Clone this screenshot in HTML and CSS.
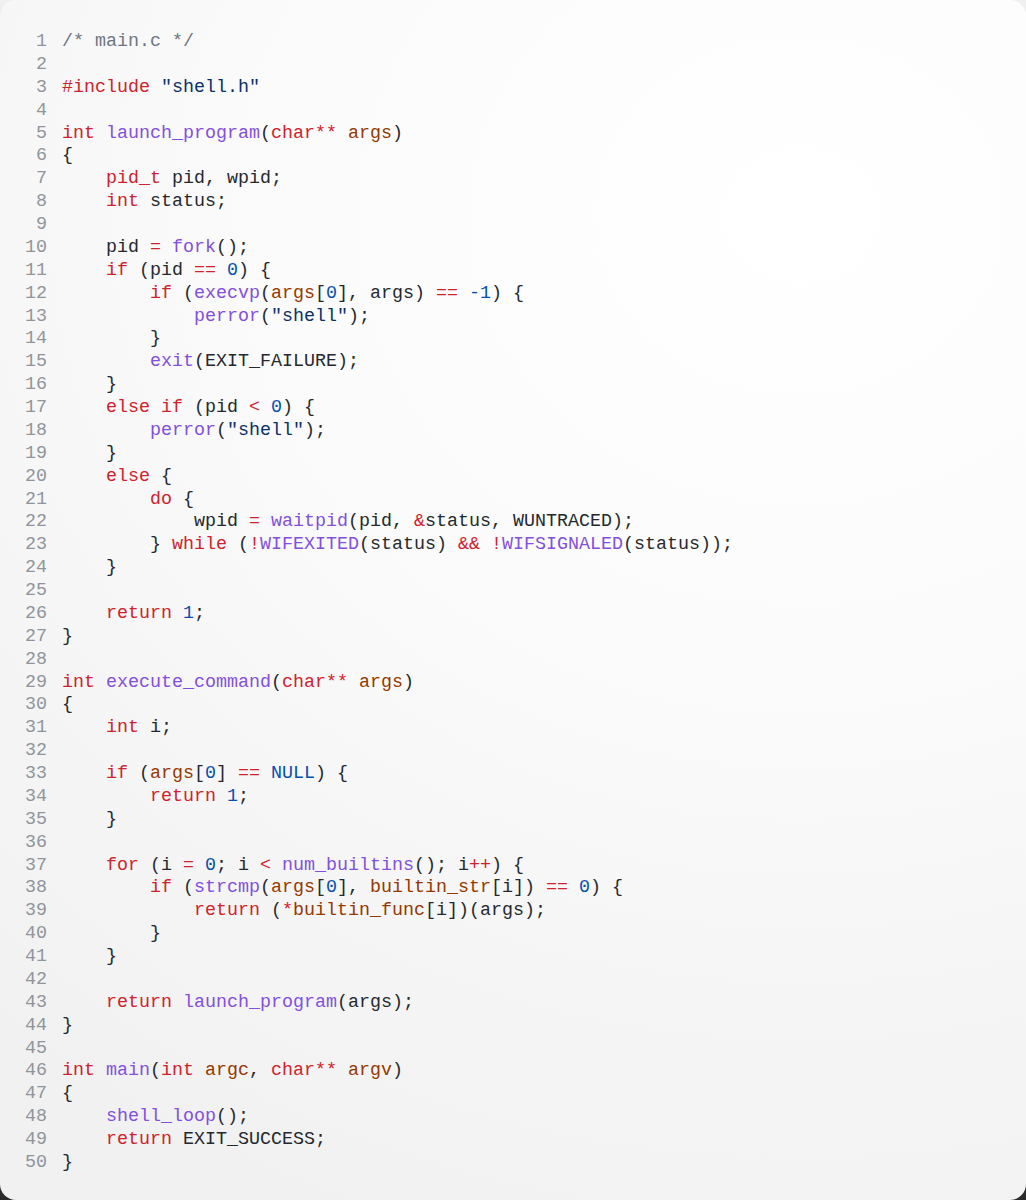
FILE: index.html
```html
<!DOCTYPE html>
<html>
<head>
<meta charset="utf-8">
<link rel="stylesheet" href="styles.css">
</head>
<body>
<div class="card">
<div class="code">
<div class="line"><span class="num">1</span><span class="src"><span class="c">/* main.c */</span></span></div>
<div class="line"><span class="num">2</span><span class="src"></span></div>
<div class="line"><span class="num">3</span><span class="src"><span class="k">#include</span> <span class="s">"shell.h"</span></span></div>
<div class="line"><span class="num">4</span><span class="src"></span></div>
<div class="line"><span class="num">5</span><span class="src"><span class="k">int</span> <span class="f">launch_program</span>(<span class="k">char**</span> <span class="v">args</span>)</span></div>
<div class="line"><span class="num">6</span><span class="src">{</span></div>
<div class="line"><span class="num">7</span><span class="src">    <span class="k">pid_t</span> pid, wpid;</span></div>
<div class="line"><span class="num">8</span><span class="src">    <span class="k">int</span> status;</span></div>
<div class="line"><span class="num">9</span><span class="src"></span></div>
<div class="line"><span class="num">10</span><span class="src">    pid <span class="k">=</span> <span class="f">fork</span>();</span></div>
<div class="line"><span class="num">11</span><span class="src">    <span class="k">if</span> (pid <span class="k">==</span> <span class="n">0</span>) {</span></div>
<div class="line"><span class="num">12</span><span class="src">        <span class="k">if</span> (<span class="f">execvp</span>(<span class="v">args</span>[<span class="n">0</span>], args) <span class="k">==</span> <span class="n">-1</span>) {</span></div>
<div class="line"><span class="num">13</span><span class="src">            <span class="f">perror</span>(<span class="s">"shell"</span>);</span></div>
<div class="line"><span class="num">14</span><span class="src">        }</span></div>
<div class="line"><span class="num">15</span><span class="src">        <span class="f">exit</span>(EXIT_FAILURE);</span></div>
<div class="line"><span class="num">16</span><span class="src">    }</span></div>
<div class="line"><span class="num">17</span><span class="src">    <span class="k">else if</span> (pid <span class="k">&lt;</span> <span class="n">0</span>) {</span></div>
<div class="line"><span class="num">18</span><span class="src">        <span class="f">perror</span>(<span class="s">"shell"</span>);</span></div>
<div class="line"><span class="num">19</span><span class="src">    }</span></div>
<div class="line"><span class="num">20</span><span class="src">    <span class="k">else</span> {</span></div>
<div class="line"><span class="num">21</span><span class="src">        <span class="k">do</span> {</span></div>
<div class="line"><span class="num">22</span><span class="src">            wpid <span class="k">=</span> <span class="f">waitpid</span>(pid, <span class="k">&amp;</span>status, WUNTRACED);</span></div>
<div class="line"><span class="num">23</span><span class="src">        } <span class="k">while</span> (<span class="k">!</span><span class="f">WIFEXITED</span>(status) <span class="k">&amp;&amp;</span> <span class="k">!</span><span class="f">WIFSIGNALED</span>(status));</span></div>
<div class="line"><span class="num">24</span><span class="src">    }</span></div>
<div class="line"><span class="num">25</span><span class="src"></span></div>
<div class="line"><span class="num">26</span><span class="src">    <span class="k">return</span> <span class="n">1</span>;</span></div>
<div class="line"><span class="num">27</span><span class="src">}</span></div>
<div class="line"><span class="num">28</span><span class="src"></span></div>
<div class="line"><span class="num">29</span><span class="src"><span class="k">int</span> <span class="f">execute_command</span>(<span class="k">char**</span> <span class="v">args</span>)</span></div>
<div class="line"><span class="num">30</span><span class="src">{</span></div>
<div class="line"><span class="num">31</span><span class="src">    <span class="k">int</span> i;</span></div>
<div class="line"><span class="num">32</span><span class="src"></span></div>
<div class="line"><span class="num">33</span><span class="src">    <span class="k">if</span> (<span class="v">args</span>[<span class="n">0</span>] <span class="k">==</span> <span class="n">NULL</span>) {</span></div>
<div class="line"><span class="num">34</span><span class="src">        <span class="k">return</span> <span class="n">1</span>;</span></div>
<div class="line"><span class="num">35</span><span class="src">    }</span></div>
<div class="line"><span class="num">36</span><span class="src"></span></div>
<div class="line"><span class="num">37</span><span class="src">    <span class="k">for</span> (i <span class="k">=</span> <span class="n">0</span>; i <span class="k">&lt;</span> <span class="f">num_builtins</span>(); i<span class="k">++</span>) {</span></div>
<div class="line"><span class="num">38</span><span class="src">        <span class="k">if</span> (<span class="f">strcmp</span>(<span class="v">args</span>[<span class="n">0</span>], <span class="v">builtin_str</span>[i]) <span class="k">==</span> <span class="n">0</span>) {</span></div>
<div class="line"><span class="num">39</span><span class="src">            <span class="k">return</span> (<span class="k">*</span><span class="v">builtin_func</span>[i])(args);</span></div>
<div class="line"><span class="num">40</span><span class="src">        }</span></div>
<div class="line"><span class="num">41</span><span class="src">    }</span></div>
<div class="line"><span class="num">42</span><span class="src"></span></div>
<div class="line"><span class="num">43</span><span class="src">    <span class="k">return</span> <span class="f">launch_program</span>(args);</span></div>
<div class="line"><span class="num">44</span><span class="src">}</span></div>
<div class="line"><span class="num">45</span><span class="src"></span></div>
<div class="line"><span class="num">46</span><span class="src"><span class="k">int</span> <span class="f">main</span>(<span class="k">int</span> <span class="v">argc</span>, <span class="k">char**</span> <span class="v">argv</span>)</span></div>
<div class="line"><span class="num">47</span><span class="src">{</span></div>
<div class="line"><span class="num">48</span><span class="src">    <span class="f">shell_loop</span>();</span></div>
<div class="line"><span class="num">49</span><span class="src">    <span class="k">return</span> EXIT_SUCCESS;</span></div>
<div class="line"><span class="num">50</span><span class="src">}</span></div>
</div>
</div>
</body>
</html>
```
FILE: styles.css
```css
html, body {
  margin: 0;
  padding: 0;
}
body {
  background: linear-gradient(to bottom, #f0f0f0 0%, #b0b0b0 60%, #2a2a2a 100%);
  height: 1200px;
  overflow: hidden;
}
.card {
  box-sizing: border-box;
  height: 1200px;
  border-radius: 16px;
  background: radial-gradient(ellipse 120% 90% at 78% 18%, #ffffff 0%, #fcfcfc 35%, #f5f5f5 75%, #f1f1f1 100%);
  padding: 31px 0 0 25px;
}
.code {
  font-family: "Liberation Mono", "DejaVu Sans Mono", monospace;
  font-size: 18.33px;
  line-height: 22.88px;
  color: #24292f;
}
.line {
  display: flex;
  height: 22.88px;
}
.num {
  width: 22px;
  text-align: right;
  color: #8f959b;
  flex: none;
}
.src {
  white-space: pre;
  margin-left: 15px;
}
.k { color: #cf222e; }
.f { color: #8250df; }
.s { color: #0a3069; }
.n { color: #0550ae; }
.v { color: #953800; }
.c { color: #6e7781; }
```
